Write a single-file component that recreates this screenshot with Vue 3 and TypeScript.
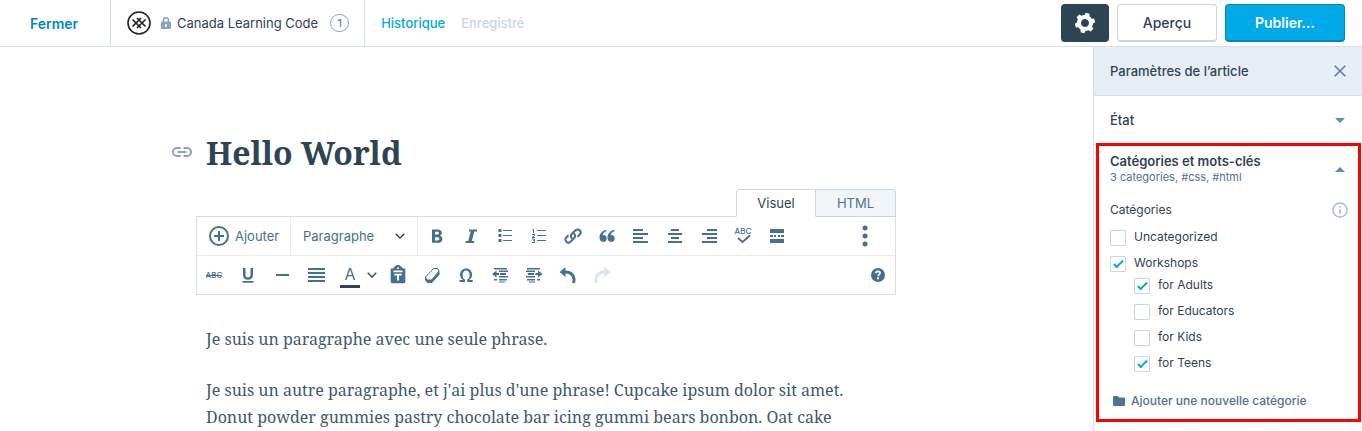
<script setup lang="ts">
import { ref } from 'vue'

interface Category {
  id: string
  name: string
  checked: boolean
  children: Category[]
}

const categories = ref<Category[]>([
  { id: 'uncategorized', name: 'Uncategorized', checked: false, children: [] },
  {
    id: 'workshops',
    name: 'Workshops',
    checked: true,
    children: [
      { id: 'adults', name: 'for Adults', checked: true, children: [] },
      { id: 'educators', name: 'for Educators', checked: false, children: [] },
      { id: 'kids', name: 'for Kids', checked: false, children: [] },
      { id: 'teens', name: 'for Teens', checked: true, children: [] },
    ],
  },
])

interface Tool {
  label: string
  fill?: string
  stroke?: string
  text?: string
  kind?: string
}

// Icons are drawn on a 24 x 24 grid.
const mainTools: Tool[] = [
  { label: 'Gras', fill: 'M7 5.5h5.7c2.7 0 4.2 1.3 4.2 3.3 0 1.5-.8 2.5-2 2.9 1.6.4 2.5 1.5 2.5 3.2 0 2.5-1.8 3.9-4.7 3.9H7zm3 5.1h2.100c1.200 0 1.800-.5 1.800-1.400s-.6-1.400-1.800-1.400H10zm0 5.900h2.300c1.300 0 2-.6 2-1.700 0-1-.7-1.600-2-1.600H10z' },
  { label: 'Italique', fill: 'M10 5.500h8v2h-2.700l-2.500 9.500H15v2H6.500v-2h2.700l2.500-9.500H10z' },
  { label: 'Liste à puces', stroke: 'M10 6.500h9M10 11.500h9M10 16.500h9', fill: 'M5.500 5h3v3h-3zM5.500 10h3v3h-3zM5.500 15h3v3h-3z', kind: 'thin' },
  { label: 'Liste numérotée', stroke: 'M10 6.500h9M10 11.500h9M10 16.500h9M5.500 5.500h1V9M5 10.500h2.500v1.200L5 13.500h3M5 15h2.500v1.600H6m1.500 0v1.900H5', kind: 'thin' },
  { label: 'Lien', stroke: 'M11 14.500a3.300 3.300 0 0 1-.2-4.500l3.700-3.700a2.800 2.800 0 0 1 4.200 4.200L16.500 12.700M13 9.500a3.300 3.300 0 0 1 .2 4.500l-3.700 3.700a2.800 2.800 0 0 1-4.200-4.200L7.500 11.300' },
  { label: 'Citation', fill: 'M11.200 6C7.700 6.700 4.500 9.300 4.500 13.400c0 2.500 1.500 4.400 3.700 4.400 2 0 3.500-1.400 3.500-3.400s-1.400-3.300-3.200-3.300c-.5 0-.8.1-1 .2.400-1.900 1.800-3.300 3.700-3.800zM19.200 6c-3.500.7-6.700 3.300-6.700 7.400 0 2.500 1.500 4.400 3.700 4.400 2 0 3.500-1.400 3.500-3.400s-1.400-3.300-3.200-3.300c-.5 0-.8.1-1 .2.400-1.900 1.800-3.300 3.700-3.800z' },
  { label: 'Aligner à gauche', fill: 'M4 5h10v2H4zM4 9h15v2H4zM4 13h10v2H4zM4 17h15v2H4z' },
  { label: 'Centrer', fill: 'M8 5h8v2H8zM5 9h14v2H5zM8 13h8v2H8zM5 17h14v2H5z' },
  { label: 'Aligner à droite', fill: 'M10 5h10v2H10zM5 9h15v2H5zM10 13h10v2H10zM5 17h15v2H5z' },
  { label: 'Vérifier l’orthographe', text: 'ABC', stroke: 'M7 14l4.500 4L19 11.500', kind: 'spell' },
  { label: 'Lire la suite', fill: 'M5 5h14v4H5zM5 15h14v4H5zM5 11h3v2H5zM9 11h2v2H9zM13 11h2v2h-2zM16 11h3v2h-3z' },
]

const extraTools: Tool[] = [
  { label: 'Barré', text: 'ABC', stroke: 'M4 12.500h16', kind: 'strike' },
  { label: 'Souligné', fill: 'M7 5h2.500v6.500c0 2 .8 3 2.500 3s2.500-1 2.500-3V5H17v6.700c0 3.300-1.900 5-5 5s-5-1.700-5-5zM6.500 18h11v1.800h-11z' },
  { label: 'Ligne horizontale', fill: 'M6 11h13v2H6z' },
  { label: 'Justifier', fill: 'M4 5h17v2H4zM4 9h17v2H4zM4 13h17v2H4zM4 17h17v2H4z' },
]

const blockTools: Tool[] = [
  { label: 'Coller en texte', fill: 'M20 5h-3V4l-2-1.500C14.500 1.500 13.300 1 12 1s-2.500.5-3 1.500L7 4v1H4v14c0 1.100.9 2 2 2h12c1.100 0 2-.9 2-2zM12 3.500a1 1 0 1 1 0 2 1 1 0 0 1 0-2zM7 9V7h10v2zm1 1.500h8v2h-2.900V18h-2.200v-5.500H8z', kind: 'paste' },
  { label: 'Supprimer la mise en forme', stroke: 'M13.500 5.500h4L19 8l-7.500 9H7l-1.500-3z', fill: 'M19.600 8v3.500L12 20H7.500L5 17v-3.500l2 3.500h4.500z', kind: 'erase' },
  { label: 'Caractère spécial', fill: 'M5.500 17h3.600c-2-1.200-3-3-3-5.200 0-3.700 2.400-6.300 6-6.300s6 2.600 6 6.300c0 2.200-1.100 4-3 5.200h3.600v2h-5.500v-2.400c1.600-.8 2.400-2.400 2.400-4.700 0-2.600-1.300-4.400-3.500-4.400s-3.500 1.800-3.500 4.400c0 2.300.8 3.900 2.400 4.700V19H5.500z' },
  { label: 'Diminuer le retrait', fill: 'M4 11L8.500 7.500V10H11v2H8.500v2.500zM6 5h13v1.500H6zM11 7.500h9v1.500h-9zM12 10h6v2h-6zM11 13h9v1.500h-9zM6 16h3v1.500H6zM11 16h8v1.500h-8zM11 18.500h6v1h-6z' },
  { label: 'Augmenter le retrait', fill: 'M20.500 11L16 7.500V10h-2.500v2H16v2.500zM5 5h13v1.500H5zM4 7.500h9v1.500H4zM6 10h6v2H6zM4 13h9v1.500H4zM5 16h8v1.500H5zM15 16h3v1.500h-3zM7 18.500h6v1H7z' },
  { label: 'Annuler', fill: 'M3.500 9L9.500 4v3.500C16 7.600 19.500 11.500 19.500 17c0 1-.2 2-.6 3h-3c.5-1 .7-1.800.7-2.800 0-3.800-2.400-6.500-7.100-6.700V14z' },
  { label: 'Rétablir', fill: 'M20.500 9L14.500 4v3.500C8 7.600 4.500 11.500 4.500 17c0 1 .2 2 .6 3h3c-.5-1-.7-1.800-.7-2.800 0-3.800 2.400-6.500 7.100-6.700V14z', kind: 'faded' },
]
</script>

<template>
  <div class="page">
    <header class="topbar">
      <button type="button" class="close-editor">Fermer</button>
      <div class="site">
        <svg class="site-logo" viewBox="0 0 24 24" aria-hidden="true">
          <circle cx="12" cy="12" r="11" fill="#fff" stroke="#222" stroke-width="1.600" />
          <path d="M5.500 8.500l8.500 8.500M10 7l8.500 8.500M18.500 8.500L10 17M14 7l-8.500 8.500" fill="none" stroke="#222" stroke-width="1.700" />
        </svg>
        <svg class="lock" viewBox="0 0 10 12" aria-hidden="true">
          <path d="M2.500 6V3.300a2.500 2.500 0 0 1 5 0V6" fill="none" stroke="#87a6bc" stroke-width="1.500" />
          <rect y="4.500" width="10" height="7.500" rx="1" fill="#87a6bc" />
          <path d="M5 7v3" stroke="#fff" stroke-width="1.500" />
        </svg>
        <span class="site-name">Canada Learning Code</span>
        <span class="count">1</span>
      </div>
      <button type="button" class="history">Historique</button>
      <span class="saved">Enregistré</span>
      <div class="actions">
        <button type="button" class="action settings" aria-label="Paramètres">
          <svg viewBox="0 0 24 24" aria-hidden="true">
            <path fill="currentColor" transform="rotate(15 12 12)" d="M20 12c0-.568-.06-1.122-.174-1.656l1.834-1.612-2-3.464-2.322.786c-.82-.736-1.787-1.308-2.860-1.657L14 2h-4l-.48 2.396c-1.070.350-2.040.920-2.858 1.657L4.340 5.268l-2 3.464 1.834 1.612C4.060 10.878 4 11.432 4 12s.06 1.122.174 1.656L2.340 15.268l2 3.464 2.322-.786c.82.736 1.787 1.308 2.860 1.657L10 22h4l.48-2.396c1.070-.35 2.038-.92 2.858-1.657l2.322.786 2-3.464-1.834-1.613c.113-.535.174-1.090.174-1.656zm-8 4c-2.210 0-4-1.790-4-4s1.790-4 4-4 4 1.790 4 4-1.790 4-4 4z" />
          </svg>
        </button>
        <button type="button" class="action preview">Aperçu</button>
        <button type="button" class="action publish">Publier…</button>
      </div>
    </header>

    <div class="body">
      <main class="editor">
        <div class="column">
          <div class="title-row">
            <svg class="permalink" viewBox="0 0 20 12" aria-hidden="true">
              <path d="M8.500 2H5a4 4 0 0 0 0 8h3.500M11.500 2H15a4 4 0 0 1 0 8h-3.500M5.500 6h9" fill="none" stroke="#87a6bc" stroke-width="2" />
            </svg>
            <h1>Hello World</h1>
          </div>

          <div class="tabs">
            <button type="button" class="tab active">Visuel</button>
            <button type="button" class="tab">HTML</button>
          </div>

          <div class="toolbar">
            <div class="tool-row">
              <button type="button" class="add">
                <svg viewBox="0 0 20 20" aria-hidden="true">
                  <circle cx="10" cy="10" r="9" fill="none" stroke="currentColor" stroke-width="2" />
                  <path d="M10 5v10M5 10h10" stroke="currentColor" stroke-width="2" />
                </svg>
                Ajouter
              </button>
              <button type="button" class="format">
                Paragraphe
                <svg class="chevron" viewBox="0 0 10 6" aria-hidden="true">
                  <path d="M.7.700L5 5 9.300.7" fill="none" stroke="#2e4453" stroke-width="1.300" />
                </svg>
              </button>
              <button v-for="tool in mainTools" :key="tool.label" type="button" class="tool" :class="tool.kind" :aria-label="tool.label">
                <svg viewBox="0 0 24 24" aria-hidden="true">
                  <text v-if="tool.text" class="glyph" x="12" y="9.500">{{ tool.text }}</text>
                  <path v-if="tool.fill" :d="tool.fill" class="solid" />
                  <path v-if="tool.stroke" :d="tool.stroke" class="line" />
                </svg>
              </button>
              <button type="button" class="tool end more" aria-label="Plus d’options">
                <svg viewBox="0 0 24 24" aria-hidden="true">
                  <circle cx="12" cy="4" r="2.500" class="solid" />
                  <circle cx="12" cy="12" r="2.500" class="solid" />
                  <circle cx="12" cy="20" r="2.500" class="solid" />
                </svg>
              </button>
            </div>
            <div class="tool-row">
              <button v-for="tool in extraTools" :key="tool.label" type="button" class="tool" :class="tool.kind" :aria-label="tool.label">
                <svg viewBox="0 0 24 24" aria-hidden="true">
                  <text v-if="tool.text" class="glyph" x="12" y="15">{{ tool.text }}</text>
                  <path v-if="tool.fill" :d="tool.fill" class="solid" />
                  <path v-if="tool.stroke" :d="tool.stroke" class="line" />
                </svg>
              </button>
              <button type="button" class="tool colour" aria-label="Couleur du texte">
                <span class="letter">A</span>
              </button>
              <button type="button" class="colour-menu" aria-label="Choisir une couleur">
                <svg class="chevron" viewBox="0 0 10 6" aria-hidden="true">
                  <path d="M.7.700L5 5 9.300.7" fill="none" stroke="#2e4453" stroke-width="1.300" />
                </svg>
              </button>
              <button v-for="tool in blockTools" :key="tool.label" type="button" class="tool" :class="tool.kind" :aria-label="tool.label">
                <svg viewBox="0 0 24 24" aria-hidden="true">
                  <path v-if="tool.fill" :d="tool.fill" class="solid" fill-rule="evenodd" />
                  <path v-if="tool.stroke" :d="tool.stroke" class="line" />
                </svg>
              </button>
              <button type="button" class="tool end" aria-label="Aide">
                <svg viewBox="0 0 24 24" aria-hidden="true">
                  <circle cx="12" cy="12" r="7" class="solid" />
                  <path d="M9.900 10.300c0-1.300.9-2 2.100-2s2.100.7 2.100 1.800c0 1.500-2.100 1.500-2.100 3.200" fill="none" stroke="#fff" stroke-width="1.700" />
                  <rect x="11" y="14.300" width="2" height="2" fill="#fff" />
                </svg>
              </button>
            </div>
          </div>

          <div class="content">
            <p>Je suis un paragraphe avec une seule phrase.</p>
            <p>
              Je suis un autre paragraphe, et j'ai plus d'une phrase! Cupcake ipsum dolor sit amet.
              Donut powder gummies pastry chocolate bar icing gummi bears bonbon. Oat cake
            </p>
          </div>
        </div>
      </main>

      <aside class="sidebar">
        <div class="sidebar-head">
          <h2>Paramètres de l’article</h2>
          <button type="button" class="plain" aria-label="Fermer les paramètres">
            <svg class="cross" viewBox="0 0 12 12" aria-hidden="true">
              <path d="M.7.700l10.600 10.600M11.300.7L.7 11.300" stroke="#4f7f9f" stroke-width="1.500" />
            </svg>
          </button>
        </div>

        <button type="button" class="section-toggle">
          État
          <svg class="arrow" viewBox="0 0 10 5" aria-hidden="true"><path d="M0 0h10L5 5z" fill="#5a8fb0" /></svg>
        </button>

        <section class="taxonomies">
          <button type="button" class="section-open">
            <span>
              <span class="section-title">Catégories et mots-clés</span>
              <span class="section-sub">3 categories, #css, #html</span>
            </span>
            <svg class="arrow" viewBox="0 0 10 5" aria-hidden="true"><path d="M0 5h10L5 0z" fill="#5a8fb0" /></svg>
          </button>

          <div class="field-head">
            <h3>Catégories</h3>
            <button type="button" class="plain" aria-label="Informations">
              <svg class="info" viewBox="0 0 16 16" aria-hidden="true">
                <circle cx="8" cy="8" r="7" fill="none" stroke="#a8bece" stroke-width="1.400" />
                <path d="M8 7v5M8 4.300v1.500" stroke="#a8bece" stroke-width="1.500" />
              </svg>
            </button>
          </div>

          <ul class="categories">
            <li v-for="cat in categories" :key="cat.id">
              <label :for="cat.id"><input :id="cat.id" v-model="cat.checked" type="checkbox" /><span>{{ cat.name }}</span></label>
              <ul v-if="cat.children.length" class="children">
                <li v-for="child in cat.children" :key="child.id">
                  <label :for="child.id"><input :id="child.id" v-model="child.checked" type="checkbox" /><span>{{ child.name }}</span></label>
                </li>
              </ul>
            </li>
          </ul>

          <button type="button" class="new-category">
            <svg viewBox="0 0 12 10" aria-hidden="true">
              <path d="M1 0h3.500L6 1.500h5a1 1 0 0 1 1 1V9a1 1 0 0 1-1 1H1a1 1 0 0 1-1-1V1a1 1 0 0 1 1-1z" fill="currentColor" />
            </svg>
            Ajouter une nouvelle catégorie
          </button>
        </section>
      </aside>
    </div>
  </div>
</template>

<style>
body {
  margin: 0;
  background: #fff;
}
</style>

<style scoped>
.page {
  min-height: 100vh;
  display: flex;
  flex-direction: column;
  font-family: Inter, 'Liberation Sans', sans-serif;
  font-size: 13px;
  line-height: 16px;
  color: #2e4453;
}

.page *,
.page *::after {
  box-sizing: border-box;
}

button {
  margin: 0;
  padding: 0;
  border: 0;
  background: none;
  font: inherit;
  color: inherit;
  cursor: pointer;
}

svg {
  display: block;
  flex: none;
}

h1,
h2,
h3,
p,
ul {
  margin: 0;
  padding: 0;
  font-weight: 400;
  list-style: none;
}

.topbar {
  display: flex;
  align-items: stretch;
  height: 47px;
  border-bottom: 1px solid #d3e0ea;
}

.close-editor {
  width: 111px;
  padding: 2px 2px 0 0;
  border-right: 1px solid #d3e0ea;
  font-size: 14px;
  font-weight: 600;
  color: #0087be;
}

.site {
  display: flex;
  align-items: center;
  padding: 0 15px 0 16px;
  border-right: 1px solid #d3e0ea;
}

.site-logo {
  width: 24px;
  height: 24px;
}

.lock {
  width: 10px;
  height: 12px;
  margin: 0 6px 0 10px;
}

.count {
  width: 19px;
  height: 18px;
  margin-left: 12px;
  border: 1px solid #87a6bc;
  border-radius: 9px;
  font-size: 11px;
  text-align: center;
  color: #4f748e;
}

.history {
  margin-left: 16px;
  font-weight: 500;
  color: #00aadc;
}

.saved {
  align-self: center;
  margin-left: 16px;
  font-weight: 500;
  color: #c8d7e1;
}

.actions {
  display: flex;
  align-items: flex-start;
  gap: 8px;
  margin-left: auto;
  padding: 4px 17px 0 0;
}

.action {
  height: 38px;
  border: 1px solid #c8d7e1;
  border-bottom-width: 2px;
  border-radius: 4px;
  font-size: 14px;
  font-weight: 500;
}

.settings {
  display: flex;
  align-items: center;
  justify-content: center;
  width: 48px;
  border: 0;
  background: #2e4453;
  color: #fff;
}

.settings svg {
  width: 24px;
  height: 24px;
}

.preview {
  width: 100px;
}

.publish {
  width: 120px;
  border-color: #008ab3;
  background: #00aae6;
  font-weight: 600;
  color: #fff;
}

.body {
  flex: 1;
  display: flex;
}

.editor {
  flex: 1;
  min-width: 0;
  padding-right: 1px;
}

.column {
  max-width: 700px;
  margin: 0 auto;
  padding-top: 86px;
}

.title-row {
  position: relative;
  padding: 0 10px;
}

.title-row h1 {
  font-family: 'Noto Serif', 'DejaVu Serif Condensed', 'Liberation Serif', serif;
  font-size: 32px;
  line-height: 40px;
  font-weight: 700;
}

.permalink {
  position: absolute;
  left: -24px;
  top: 13px;
  width: 20px;
  height: 12px;
}

.tabs {
  position: relative;
  display: flex;
  justify-content: flex-end;
  margin-top: 16px;
  margin-bottom: -1px;
}

.tab {
  width: 80px;
  height: 28px;
  border: 1px solid #c8d7e1;
  border-left: 0;
  border-radius: 0 4px 0 0;
  background: #f3f6f8;
  color: #4f748e;
  font-size: 13px;
}

.tab.active {
  border-left: 1px solid #c8d7e1;
  border-bottom-color: #fff;
  border-radius: 4px 0 0 0;
  background: #fff;
  color: #2e4453;
}

.toolbar {
  border: 1px solid #d3e0ea;
  color: #46708f;
}

.tool-row {
  display: flex;
  height: 38px;
}

.tool-row + .tool-row {
  height: 39px;
  border-top: 1px solid #e4ecf1;
}

.add {
  display: flex;
  align-items: center;
  gap: 6px;
  width: 94px;
  padding-left: 12px;
  border-right: 1px solid #e4ecf1;
}

.add svg {
  width: 20px;
  height: 20px;
}

.format {
  display: flex;
  align-items: center;
  justify-content: space-between;
  width: 127px;
  margin-right: 2px;
  padding: 0 12px;
  border-right: 1px solid #e4ecf1;
}

.chevron {
  width: 10px;
  height: 6px;
}

.tool {
  display: flex;
  align-items: center;
  justify-content: center;
  width: 34px;
}

.tool svg {
  width: 24px;
  height: 24px;
}

.tool.end {
  margin-left: auto;
}

.tool.more {
  margin-right: 13px;
}

.solid {
  fill: currentColor;
}

.line {
  fill: none;
  stroke: currentColor;
  stroke-width: 2px;
}

.thin .line,
.strike .line,
.erase .line {
  stroke-width: 1px;
}

.glyph {
  fill: currentColor;
  font-size: 8px;
  font-weight: 500;
  text-anchor: middle;
}

.paste svg {
  width: 22px;
  height: 22px;
}

.faded {
  color: #d9e4eb;
}

.colour .letter {
  width: 20px;
  height: 22px;
  margin-top: 4px;
  border-bottom: 3px solid #2e4453;
  font-size: 16px;
}

.colour-menu {
  display: flex;
  align-items: center;
  width: 14px;
}

.content {
  padding: 31px 10px 0;
  font-family: 'Noto Serif', 'DejaVu Serif Condensed', 'Liberation Serif', serif;
  font-size: 16px;
  line-height: 27px;
  color: #3d596d;
}

.content p {
  margin-bottom: 24px;
}

.content p:last-child {
  margin-bottom: 0;
}

.sidebar {
  width: 269px;
  border-left: 1px solid #d3e0ea;
}

.sidebar-head {
  display: flex;
  align-items: center;
  justify-content: space-between;
  height: 49px;
  padding: 0 16px;
  border-bottom: 1px solid #d3e0ea;
  background: #e6edf4;
}

.sidebar-head h2 {
  font-size: 13px;
  font-weight: 500;
}

.cross {
  width: 12px;
  height: 12px;
}

.section-toggle {
  display: flex;
  align-items: center;
  justify-content: space-between;
  width: 100%;
  height: 49px;
  padding: 0 17px 0 16px;
  border-bottom: 1px solid #d3e0ea;
  font-weight: 500;
}

.arrow {
  width: 10px;
  height: 5px;
}

.taxonomies {
  position: relative;
  padding: 8px 0 13px 16px;
}

.taxonomies::after {
  content: '';
  position: absolute;
  inset: -2px 1px 0 2px;
  border: 3px solid #f00;
  pointer-events: none;
}

.section-open {
  display: flex;
  align-items: center;
  justify-content: space-between;
  width: 100%;
  padding-right: 17px;
  text-align: left;
}

.section-title,
.section-sub {
  display: block;
}

.section-title {
  font-weight: 600;
}

.section-sub {
  font-size: 11px;
  color: #4f748e;
}

.field-head {
  display: flex;
  align-items: center;
  justify-content: space-between;
  margin-top: 17px;
  padding-right: 14px;
}

.field-head h3 {
  font-size: 12px;
}

.info {
  width: 16px;
  height: 16px;
}

.categories {
  margin-top: 11px;
  font-size: 12px;
}

.categories label {
  display: flex;
  gap: 8px;
  height: 26px;
}

.categories label span {
  line-height: 16px;
}

.categories input {
  appearance: none;
  width: 16px;
  height: 16px;
  margin: 1px 0 0;
  border: 1px solid #c8d7e1;
  border-radius: 1px;
  background: #fff;
}

.categories input:checked::after {
  content: '';
  display: block;
  width: 5px;
  height: 10px;
  margin: 1px 0 0 5px;
  border: solid #00aadc;
  border-width: 0 2px 2px 0;
  transform: rotate(45deg);
}

.children {
  margin: -4px 0 0 24px;
}

.new-category {
  display: flex;
  align-items: center;
  gap: 6px;
  margin: 12px 0 0 3px;
  font-size: 12px;
  font-weight: 500;
  color: #4f748e;
}

.new-category svg {
  width: 12px;
  height: 10px;
}
</style>
